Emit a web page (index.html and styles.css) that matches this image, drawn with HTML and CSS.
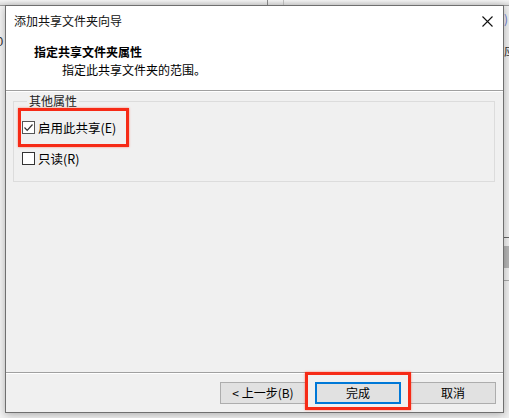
FILE: index.html
```html
<!DOCTYPE html>
<html lang="zh">
<head>
<meta charset="utf-8">
<link rel="stylesheet" href="styles.css">
</head>
<body>
<div class="desktop">
  <div class="bg-top">
    <span class="bg-div d1"></span><span class="bg-div d2"></span>
  </div>
  <div class="bg-left">0</div>
  <div class="bg-right">
    <span class="br-text">)</span>
    <span class="br-text2">应</span>
    <span class="br-line l1"></span>
    <span class="br-thumb"></span>
    <span class="br-line l2"></span>
  </div>

  <div class="dialog">
    <div class="titlebar">
      <span class="title">添加共享文件夹向导</span>
      <svg class="close" width="11" height="11" viewBox="0 0 11 11"><path d="M0.5 0.5 L10.5 10.5 M10.5 0.5 L0.5 10.5" stroke="#111" stroke-width="1.1" fill="none"/></svg>
    </div>
    <div class="header">
      <div class="h-title">指定共享文件夹属性</div>
      <div class="h-sub">指定此共享文件夹的范围。</div>
    </div>
    <div class="body">
      <fieldset class="group">
        <legend>其他属性</legend>
        <label class="chk">
          <span class="box checked"><svg width="11" height="11" viewBox="0 0 11 11"><path d="M1.5 5.5 L4.2 8.3 L9.5 2.5" stroke="#333" stroke-width="1.2" fill="none"/></svg></span>
          <span>启用此共享(E)</span>
        </label>
        <label class="chk">
          <span class="box"></span>
          <span>只读(R)</span>
        </label>
      </fieldset>
    </div>
    <div class="footer">
      <button class="btn">&lt; 上一步(B)</button>
      <button class="btn default">完成</button>
      <button class="btn">取消</button>
    </div>
  </div>

  <div class="mark m1"></div>
  <div class="mark m2"></div>
</div>
</body>
</html>
```

FILE: styles.css
```css
* { box-sizing: border-box; }
html, body { margin: 0; padding: 0; }
body {
  width: 509px;
  height: 418px;
  overflow: hidden;
  background: #f3f3f3;
  font-family: "Noto Sans CJK SC", "Microsoft YaHei", sans-serif;
  font-size: 12px;
  color: #000;
}
.desktop {
  position: relative;
  width: 509px;
  height: 418px;
}
.bg-top {
  position: absolute;
  left: 0; top: 0;
  width: 509px; height: 6px;
  background: linear-gradient(#f4f4f4, #dcdcdc);
  border-bottom: 1px solid #9a9a9a;
}
.bg-div {
  position: absolute;
  top: 0; width: 1px; height: 6px;
  background: #8a8a8a;
}
.d1 { left: 267px; }
.d2 { left: 283px; background: #c0c0c0; }
.bg-left {
  position: absolute;
  left: -4px; top: 34px;
  font-size: 13px;
  color: #333;
  font-family: "Liberation Sans", sans-serif;
}
.bg-right {
  position: absolute;
  left: 503px; top: 6px;
  width: 6px; height: 412px;
  background: #f0f0f0;
}
.br-text {
  position: absolute;
  left: 1px; top: 4px;
  color: #6a7bd0;
  font-size: 12px;
}
.br-text2 {
  position: absolute;
  left: 1px; top: 36px;
  color: #333;
  font-size: 12px;
}
.br-line {
  position: absolute;
  left: 0; width: 6px; height: 1px;
  background: #666;
}
.l1 { top: 231px; }
.l2 { top: 274px; background: #aaa; }
.br-thumb {
  position: absolute;
  left: 0; top: 240px;
  width: 6px; height: 22px;
  background: #b5b5b5;
}

.dialog {
  position: absolute;
  left: 5px; top: 5px;
  width: 499px; height: 408px;
  border: 1px solid #6f6f6f;
  background: #f0f0f0;
  box-shadow: 0 2px 8px rgba(0,0,0,0.28);
  display: flex;
  flex-direction: column;
}
.titlebar {
  height: 30px;
  background: #fff;
  display: flex;
  align-items: center;
  justify-content: space-between;
  padding: 0 10px 0 8px;
}
.title {
  font-size: 12px;
  line-height: 16px;
  color: #111;
}
.close { display: block; }
.header {
  background: #fff;
  padding: 7px 0 11px 28px;
  border-bottom: 1px solid #a0a0a0;
  box-shadow: 0 1px 0 #fff;
}
.h-title {
  font-weight: bold;
  font-size: 12px;
  line-height: 18px;
}
.h-sub {
  font-size: 12px;
  line-height: 18px;
  padding-left: 28px;
}
.body {
  flex: 1;
  padding: 3px 8px 0 7px;
}
.group {
  margin: 0;
  border: 1px solid #dcdcdc;
  padding: 9px 8px 10px 8px;
  height: 88px;
}
.group legend {
  padding: 0 2px;
  margin-left: 5px;
  font-size: 12px;
  line-height: 14px;
  color: #222;
}
.chk {
  display: flex;
  align-items: center;
  height: 20px;
  margin-bottom: 11px;
  font-size: 12.5px;
  gap: 3px;
}
.box {
  width: 13px; height: 13px;
  border: 1px solid #333;
  background: #fff;
  display: flex;
  align-items: center;
  justify-content: center;
}
.box.checked { border-color: #555; }
.box svg { display: block; }
.footer {
  height: 40px;
  border-top: 1px solid #a0a0a0;
  box-shadow: inset 0 1px 0 #fff;
  display: flex;
  justify-content: flex-end;
  align-items: flex-start;
  padding: 9px 7px 0 0;
  gap: 9px;
}
.btn {
  width: 86px; height: 22px;
  background: #e1e1e1;
  border: 1px solid #adadad;
  font-family: "Noto Sans CJK SC", sans-serif;
  font-size: 12px;
  color: #000;
  padding: 0;
  margin: 0;
  line-height: 18px;
}
.btn.default {
  border: 2px solid #0078d7;
}
.mark {
  position: absolute;
  border: 3px solid #f62a16;
  box-shadow: 0 0 2px rgba(255,60,30,0.6);
}
.m1 { left: 18px; top: 108px; width: 111px; height: 39px; }
.m2 { left: 305px; top: 372px; width: 106px; height: 38px; }
```
